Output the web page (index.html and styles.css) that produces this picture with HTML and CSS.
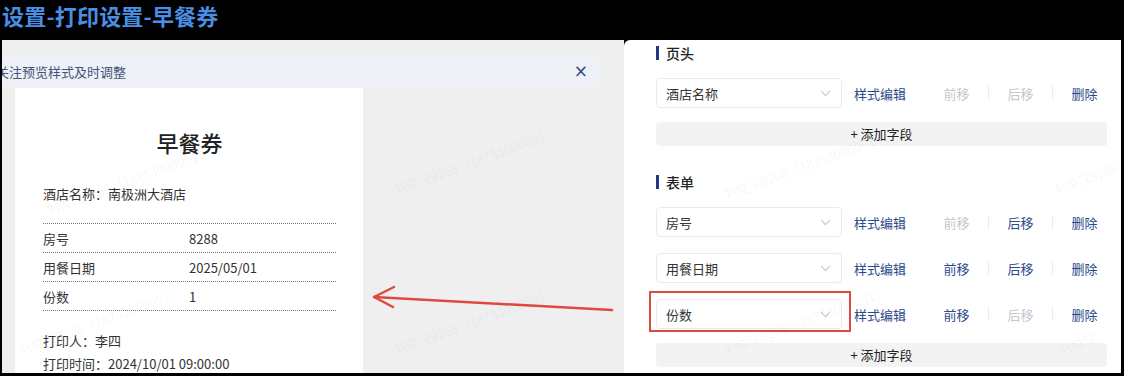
FILE: index.html
```html
<!DOCTYPE html>
<html lang="zh-CN">
<head>
    <meta charset="utf-8">
    <title>设置-打印设置-早餐券</title>
    <link rel="stylesheet" href="styles.css">
</head>
<body>
    <h1 class="page-title">设置-打印设置-早餐券</h1>
    <div class="shot">
        <div class="preview">
            <div class="notice">
                <span class="notice-text">关注预览样式及时调整</span>
                <span class="notice-close">×</span>
            </div>
            <div class="ticket">
                <h2 class="ticket-title">早餐券</h2>
                <p class="ticket-line hotel">酒店名称：南极洲大酒店</p>
                <div class="ticket-table">
                    <div class="ticket-row"><span>房号</span><span>8288</span></div>
                    <div class="ticket-row"><span>用餐日期</span><span>2025/05/01</span></div>
                    <div class="ticket-row"><span>份数</span><span>1</span></div>
                </div>
                <p class="ticket-line printer">打印人：李四</p>
                <p class="ticket-line">打印时间：2024/10/01 09:00:00</p>
            </div>
        </div>
        <div class="config">
            <div class="section">
                <div class="section-title">页头</div>
                <div class="field-row">
                    <div class="select">酒店名称<svg class="chevron" viewBox="0 0 12 8"><polyline points="1,1 6,6.5 11,1"/></svg></div>
                    <a class="link">样式编辑</a>
                    <a class="link cell disabled">前移</a>
                    <span class="divider"></span>
                    <a class="link cell disabled">后移</a>
                    <span class="divider"></span>
                    <a class="link cell">删除</a>
                </div>
                <div class="add-btn">+ 添加字段</div>
            </div>
            <div class="section">
                <div class="section-title">表单</div>
                <div class="field-row">
                    <div class="select">房号<svg class="chevron" viewBox="0 0 12 8"><polyline points="1,1 6,6.5 11,1"/></svg></div>
                    <a class="link">样式编辑</a>
                    <a class="link cell disabled">前移</a>
                    <span class="divider"></span>
                    <a class="link cell">后移</a>
                    <span class="divider"></span>
                    <a class="link cell">删除</a>
                </div>
                <div class="field-row">
                    <div class="select">用餐日期<svg class="chevron" viewBox="0 0 12 8"><polyline points="1,1 6,6.5 11,1"/></svg></div>
                    <a class="link">样式编辑</a>
                    <a class="link cell">前移</a>
                    <span class="divider"></span>
                    <a class="link cell">后移</a>
                    <span class="divider"></span>
                    <a class="link cell">删除</a>
                </div>
                <div class="field-row">
                    <div class="select marked">份数<svg class="chevron" viewBox="0 0 12 8"><polyline points="1,1 6,6.5 11,1"/></svg></div>
                    <a class="link">样式编辑</a>
                    <a class="link cell">前移</a>
                    <span class="divider"></span>
                    <a class="link cell disabled">后移</a>
                    <span class="divider"></span>
                    <a class="link cell">删除</a>
                </div>
                <div class="add-btn">+ 添加字段</div>
            </div>
        </div>

        <!-- annotation arrow drawn over the screenshot -->
        <svg class="arrow" viewBox="0 0 260 40">
            <line x1="248" y1="32" x2="10" y2="19"/>
            <polyline points="30,9 10,19 29,29"/>
        </svg>

        <div class="watermarks">
            <span style="left:48px;top:160px">刘俊汉9268（18753000051）</span>
            <span style="left:395px;top:140px">刘俊汉9268（18753000051）</span>
            <span style="left:725px;top:145px">刘俊汉9268（18753000051）</span>
            <span style="left:1055px;top:140px">刘俊汉9268</span>
            <span style="left:20px;top:300px">刘俊汉9268（18753000051）</span>
            <span style="left:395px;top:300px">刘俊汉9268（18753000051）</span>
            <span style="left:725px;top:300px">刘俊汉9268（18753000051）</span>
            <span style="left:1060px;top:300px">刘俊汉</span>
        </div>
    </div>
</body>
</html>
```

FILE: styles.css
```css
body {
    margin: 0;
    width: 1124px;
    height: 376px;
    overflow: hidden;
    background-color: #000;
    font-family: "Noto Sans CJK SC", "Noto Sans", sans-serif;
}

.page-title {
    margin: 0;
    height: 40px;
    padding-left: 2px;
    font-size: 22px;
    font-weight: 700;
    line-height: 30px;
    color: #4a8fe3;
    letter-spacing: 0.2px;
}

.shot {
    position: relative;
    display: flex;
    height: 333px;
    margin: 0 3px 0 2px;
    overflow: hidden;
}

/* left: print preview */
.preview {
    width: 622px;
    flex-shrink: 0;
    background-color: #efefef;
    padding-top: 16px;
    box-sizing: border-box;
}

.notice {
    width: 600px;
    height: 30px;
    background-color: #edf1f6;
    display: flex;
    justify-content: space-between;
    align-items: center;
    padding-right: 14px;
    box-sizing: border-box;
    overflow: hidden;
}

.notice-text {
    margin-left: -6px;
    font-size: 13px;
    color: #45527a;
}

.notice-close {
    font-family: "DejaVu Sans", sans-serif;
    font-size: 17px;
    color: #2b4a8a;
}

.ticket {
    width: 348px;
    height: 300px;
    margin: 2px 0 0 13px;
    padding: 0 27px 0 28px;
    background-color: #fff;
    box-sizing: border-box;
    color: #333;
    font-size: 13px;
}

.ticket-title {
    margin: 0;
    padding-top: 39px;
    text-align: center;
    font-size: 22px;
    font-weight: 500;
    line-height: 30px;
    color: #222;
}

.ticket-line {
    margin: 0;
    line-height: 23px;
}

.hotel {
    margin-top: 25px;
}

.ticket-table {
    margin-top: 18px;
    border-top: 1px dotted #777;
}

.ticket-row {
    display: flex;
    height: 28px;
    align-items: center;
    border-bottom: 1px dotted #777;
}

.ticket-row span:first-child {
    width: 146px;
}

.printer {
    margin-top: 18px;
}

/* right: field config */
.config {
    flex: 1;
    background-color: #fff;
    padding: 4px 14px 0 32px;
    border-top-left-radius: 6px;
}

.section {
    margin-bottom: 27px;
}

.section-title {
    height: 18px;
    display: flex;
    align-items: center;
    font-size: 14px;
    font-weight: 500;
    color: #222;
    margin-bottom: 16px;
}

.section-title::before {
    content: "";
    width: 3px;
    height: 14px;
    background-color: #1e3a85;
    margin-right: 7px;
}

.field-row {
    display: flex;
    align-items: center;
    height: 30px;
    margin-bottom: 16px;
}

.field-row + .add-btn {
    margin-top: -2px;
}

.select {
    position: relative;
    width: 186px;
    height: 30px;
    box-sizing: border-box;
    border: 1px solid #ebebeb;
    border-radius: 4px;
    padding: 0 10px 0 9px;
    display: flex;
    align-items: center;
    justify-content: space-between;
    font-size: 13px;
    color: #333;
    margin-right: 12px;
}

.select.marked::after {
    content: "";
    position: absolute;
    top: -9px;
    left: -8px;
    right: -10px;
    bottom: -4px;
    border: 2px solid #dc4b42;
}

.chevron {
    width: 11px;
    height: 7px;
    fill: none;
    stroke: #c8c8c8;
    stroke-width: 1.2;
}

.link {
    font-size: 13px;
    color: #2b4a8a;
    cursor: pointer;
}

.link.cell {
    width: 63px;
    text-align: center;
}

.link:not(.cell) {
    width: 71px;
}

.link.disabled {
    color: #c4c7cf;
}

.divider {
    width: 1px;
    height: 14px;
    background-color: #ececec;
}

.add-btn {
    height: 24px;
    width: 451px;
    border-radius: 4px;
    background-color: #f3f3f3;
    text-align: center;
    font-size: 13px;
    line-height: 24px;
    color: #222;
}

.arrow {
    position: absolute;
    left: 362px;
    top: 238px;
    width: 260px;
    height: 40px;
    fill: none;
    stroke: #e0483f;
    stroke-width: 2.5;
    stroke-linecap: round;
    stroke-linejoin: round;
}

.watermarks span {
    position: absolute;
    font-size: 13px;
    color: rgba(0, 0, 0, 0.05);
    transform: rotate(-20deg);
    transform-origin: left bottom;
    white-space: nowrap;
    pointer-events: none;
}
```
